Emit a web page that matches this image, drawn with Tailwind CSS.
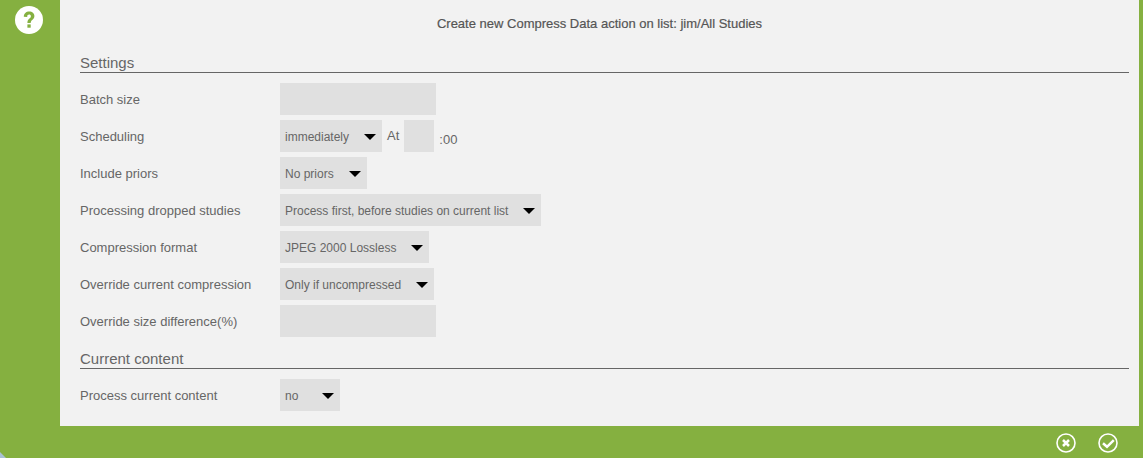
<!DOCTYPE html>
<html lang="en">
<head>
    <meta charset="UTF-8">
    <title>Create action</title>
    <script src="https://cdn.jsdelivr.net/npm/@tailwindcss/browser@4"></script>
</head>
<body class="relative bg-[#85b040] h-[458px] w-[1143px] overflow-hidden font-['Liberation_Sans',Arial,sans-serif] text-[13px] text-[#666666]">
    <div class="flex h-[426px]">
        <div class="w-[60px] shrink-0 flex justify-center pt-[6px]">
            <svg class="w-[28px] h-[28px] mr-[2px]" viewBox="0 0 28 28">
                <circle cx="14" cy="14" r="14" fill="#fff"/>
                <path d="M8.800 10.800c0-3.300 2.300-5.300 5.400-5.300 3.100 0 5.200 1.800 5.200 4.500 0 3.900-3.700 3.700-3.700 7h-3.300c0-4.400 3.500-4.400 3.500-6.700 0-1-.7-1.700-1.800-1.700-1.200 0-1.900.8-1.900 2.300z" fill="#85b040"/>
                <rect x="12.400" y="18.400" width="3.300" height="3.300" fill="#85b040"/>
            </svg>
        </div>
        <div class="w-[1079px] bg-[#f2f2f2] px-[20px]">
            <div class="h-[47px] pt-[16px] text-center text-[13px] leading-[15px] text-[#555555] [-webkit-text-stroke:0.2px_#555555]">Create new Compress Data action on list: jim/All Studies</div>
            <h2 class="h-[26px] w-[1049px] border-b border-[#666666] text-[15px] leading-[18px] pt-[7px] box-border">Settings</h2>
            <div class="flex flex-col gap-[5px] mt-[10px]">
                <div class="flex items-center h-[32px]">
                    <label class="w-[200px] pt-[2px]">Batch size</label>
                    <div class="w-[156px] h-[32px] bg-[#e0e0e0]"></div>
                </div>
                <div class="flex items-center h-[32px]">
                    <label class="w-[200px] pt-[2px]">Scheduling</label>
                    <div class="w-[102px] h-[32px] bg-[#e0e0e0] flex items-center justify-between pl-[5px] pr-[6px] text-[12px]"><span class="pt-[2px]">immediately</span><span class="w-0 h-0 border-x-[6px] border-x-transparent border-t-[6px] border-t-black mt-[2px]"></span></div>
                    <span class="ml-[5px] mr-[5px] mb-[1px]">At</span>
                    <div class="w-[30px] h-[32px] bg-[#e0e0e0]"></div>
                    <span class="ml-[5px] mt-[8px]">:00</span>
                </div>
                <div class="flex items-center h-[32px]">
                    <label class="w-[200px] pt-[2px]">Include priors</label>
                    <div class="w-[87px] h-[32px] bg-[#e0e0e0] flex items-center justify-between pl-[5px] pr-[6px] text-[12px]"><span class="pt-[2px]">No priors</span><span class="w-0 h-0 border-x-[6px] border-x-transparent border-t-[6px] border-t-black mt-[2px]"></span></div>
                </div>
                <div class="flex items-center h-[32px]">
                    <label class="w-[200px] pt-[2px]">Processing dropped studies</label>
                    <div class="w-[261px] h-[32px] bg-[#e0e0e0] flex items-center justify-between pl-[5px] pr-[6px] text-[12px]"><span class="pt-[2px]">Process first, before studies on current list</span><span class="w-0 h-0 border-x-[6px] border-x-transparent border-t-[6px] border-t-black mt-[2px]"></span></div>
                </div>
                <div class="flex items-center h-[32px]">
                    <label class="w-[200px] pt-[2px]">Compression format</label>
                    <div class="w-[149px] h-[32px] bg-[#e0e0e0] flex items-center justify-between pl-[5px] pr-[6px] text-[12px]"><span class="pt-[2px]">JPEG 2000 Lossless</span><span class="w-0 h-0 border-x-[6px] border-x-transparent border-t-[6px] border-t-black mt-[2px]"></span></div>
                </div>
                <div class="flex items-center h-[32px]">
                    <label class="w-[200px] pt-[2px]">Override current compression</label>
                    <div class="w-[154px] h-[32px] bg-[#e0e0e0] flex items-center justify-between pl-[5px] pr-[6px] text-[12px]"><span class="pt-[2px]">Only if uncompressed</span><span class="w-0 h-0 border-x-[6px] border-x-transparent border-t-[6px] border-t-black mt-[2px]"></span></div>
                </div>
                <div class="flex items-center h-[32px]">
                    <label class="w-[200px] pt-[2px]">Override size difference(%)</label>
                    <div class="w-[156px] h-[32px] bg-[#e0e0e0]"></div>
                </div>
            </div>
            <h2 class="h-[26px] w-[1049px] border-b border-[#666666] text-[15px] leading-[18px] pt-[7px] mt-[6px] box-border">Current content</h2>
            <div class="flex items-center h-[32px] mt-[10px]">
                <label class="w-[200px] pt-[2px]">Process current content</label>
                <div class="w-[60px] h-[32px] bg-[#e0e0e0] flex items-center justify-between pl-[5px] pr-[6px] text-[12px]"><span class="pt-[2px]">no</span><span class="w-0 h-0 border-x-[6px] border-x-transparent border-t-[6px] border-t-black mt-[2px]"></span></div>
            </div>
        </div>
    </div>
    <div class="h-[32px] flex items-start justify-end gap-[22px] pt-[7px] pr-[25px]">
        <svg class="w-[20px] h-[20px]" viewBox="0 0 20 20" fill="none" stroke="#fff">
            <circle cx="10" cy="10" r="9" stroke-width="1.600"/>
            <path d="M7 7l6 6M13 7l-6 6" stroke-width="2.500"/>
        </svg>
        <svg class="w-[20px] h-[20px]" viewBox="0 0 20 20" fill="none" stroke="#fff">
            <circle cx="10" cy="10" r="9" stroke-width="1.600"/>
            <path d="M5 10.300l4 3.500 6.800-6.600" stroke-width="2.500"/>
        </svg>
    </div>
    <svg class="absolute left-0 bottom-0 w-[6px] h-[6px]" viewBox="0 0 6 6"><polygon points="0,0 6,6 0,6" fill="#a9c0d4"/></svg>
</body>
</html>
